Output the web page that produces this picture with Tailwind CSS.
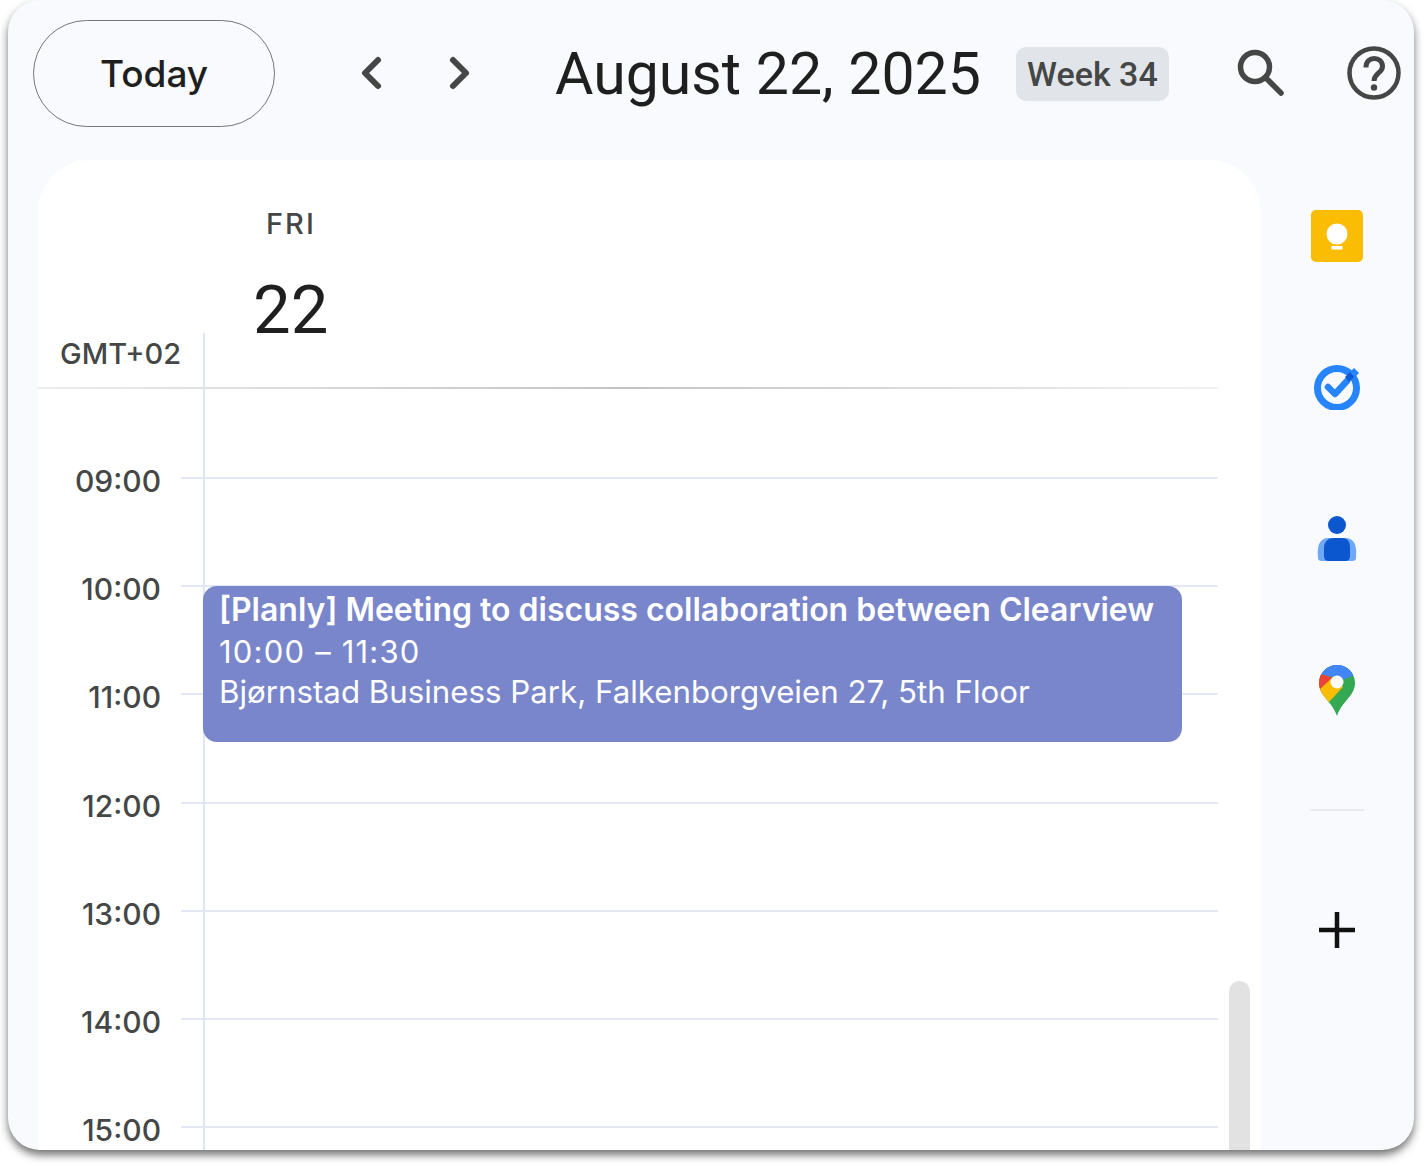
<!DOCTYPE html>
<html lang="en">
<head>
    <meta charset="UTF-8">
    <title>Calendar</title>
    <script src="https://cdn.jsdelivr.net/npm/@tailwindcss/browser@4"></script>
</head>
<body class="w-[1426px] h-[1166px] overflow-hidden bg-white font-['Roboto',sans-serif]">
    <div class="ml-[8px] w-[1406px] h-[1150px] rounded-[32px] overflow-hidden bg-[#f8fafd] shadow-[0_5px_8px_rgba(0,0,0,0.55)] flex flex-col">

        <!-- Top bar -->
        <header class="h-[160px] shrink-0 flex items-start text-[#1f1f1f]">
            <button class="ml-[25px] mt-[20px] w-[242px] h-[107px] rounded-full border-[1.5px] border-[#747775] text-[37px] font-medium font-['Inter',sans-serif] text-[#1f1f1f]">Today</button>
            <svg class="ml-[79px] mt-[50px]" width="36" height="46" viewBox="0 0 36 46" fill="none" stroke="#444746" stroke-width="6" stroke-linecap="round" stroke-linejoin="round"><path d="M24 10 L11 23 L24 36"/></svg>
            <svg class="ml-[51px] mt-[50px]" width="36" height="46" viewBox="0 0 36 46" fill="none" stroke="#444746" stroke-width="6" stroke-linecap="round" stroke-linejoin="round"><path d="M12 10 L25 23 L12 36"/></svg>
            <h1 class="ml-[78px] mt-[38px] text-[59px] leading-[72px] whitespace-nowrap text-[#1f1f1f]">August 22, 2025</h1>
            <span class="ml-[35px] mt-[47px] w-[153px] h-[54px] rounded-[10px] bg-[#e1e5ea] flex items-center justify-center text-[34px] font-medium text-[#444746]">Week 34</span>
            <svg class="ml-[64px] mt-[46px]" width="54" height="54" viewBox="0 0 54 54" fill="none" stroke="#444746" stroke-width="5.5"><circle cx="22" cy="21" r="14.5"/><path d="M32.5 31.5 L48 47" stroke-linecap="round"/></svg>
            <svg class="ml-[59px] mt-[45px]" width="56" height="56" viewBox="0 0 56 56" fill="none" stroke="#444746"><circle cx="28" cy="28" r="24.5" stroke-width="4.5"/><path d="M20 22.5 C20 10 36.5 11 36.5 21.5 C36.5 28 28 28 28 36" stroke-width="5"/><circle cx="28" cy="42.5" r="3.2" fill="#444746" stroke="none"/></svg>
        </header>

        <div class="flex flex-1 min-h-0">
            <!-- Day panel -->
            <main class="relative ml-[30px] w-[1223px] bg-white rounded-t-[52px] overflow-hidden">
                <div class="relative h-[229px]">
                    <div class="absolute left-[228px] top-[46px] text-[29px] leading-[36px] font-medium tracking-[2px] text-[#444746] font-['Inter',sans-serif]">FRI</div>
                    <div class="absolute left-[215px] top-[107px] text-[67px] leading-[86px] text-[#1f1f1f]">22</div>
                    <div class="absolute left-[22px] top-[176px] text-[29px] leading-[36px] font-medium text-[#444746] font-['Inter',sans-serif]">GMT+02</div>
                    <div class="absolute left-0 right-[43px] bottom-0 h-[2px] bg-gradient-to-r from-[#ececec] via-[#c4c4c4] to-[#f2f2f2]"></div>
                </div>

                <div class="pt-[88px] font-['Inter',sans-serif]">
                    <div class="flex h-[108.2px]"><span class="w-[123px] -mt-[14px] text-right text-[30px] leading-[36px] font-medium text-[#444746] h-[36px]">09:00</span><div class="ml-[20px] mr-[43px] flex-1 border-t-2 border-[#e3e8f4]"></div></div>
                    <div class="flex h-[108.2px]"><span class="w-[123px] -mt-[14px] text-right text-[30px] leading-[36px] font-medium text-[#444746] h-[36px]">10:00</span><div class="ml-[20px] mr-[43px] flex-1 border-t-2 border-[#e3e8f4]"></div></div>
                    <div class="flex h-[108.2px]"><span class="w-[123px] -mt-[14px] text-right text-[30px] leading-[36px] font-medium text-[#444746] h-[36px]">11:00</span><div class="ml-[20px] mr-[43px] flex-1 border-t-2 border-[#e3e8f4]"></div></div>
                    <div class="flex h-[108.2px]"><span class="w-[123px] -mt-[14px] text-right text-[30px] leading-[36px] font-medium text-[#444746] h-[36px]">12:00</span><div class="ml-[20px] mr-[43px] flex-1 border-t-2 border-[#e3e8f4]"></div></div>
                    <div class="flex h-[108.2px]"><span class="w-[123px] -mt-[14px] text-right text-[30px] leading-[36px] font-medium text-[#444746] h-[36px]">13:00</span><div class="ml-[20px] mr-[43px] flex-1 border-t-2 border-[#e3e8f4]"></div></div>
                    <div class="flex h-[108.2px]"><span class="w-[123px] -mt-[14px] text-right text-[30px] leading-[36px] font-medium text-[#444746] h-[36px]">14:00</span><div class="ml-[20px] mr-[43px] flex-1 border-t-2 border-[#e3e8f4]"></div></div>
                    <div class="flex h-[108.2px]"><span class="w-[123px] -mt-[14px] text-right text-[30px] leading-[36px] font-medium text-[#444746] h-[36px]">15:00</span><div class="ml-[20px] mr-[43px] flex-1 border-t-2 border-[#e3e8f4]"></div></div>
                </div>

                <!-- Column rule, event and scrollbar sit over the grid -->
                <div class="absolute left-[165px] top-[173px] bottom-0 w-[1.5px] bg-[#dfe5f2]"></div>
                <div class="absolute left-[165px] top-[426px] w-[979px] h-[156px] rounded-[14px] bg-[#7986cb] text-white pl-[16px] pt-[4px] text-[31px] leading-[40.5px] whitespace-nowrap font-['Inter',sans-serif]">
                    <div class="text-[32px] font-semibold">[Planly] Meeting to discuss collaboration between Clearview</div>
                    <div class="tracking-[1.2px] pt-[1px]">10:00 – 11:30</div>
                    <div class="text-[31.25px]">Bjørnstad Business Park, Falkenborgveien 27, 5th Floor</div>
                </div>
                <div class="absolute left-[1191px] top-[821px] bottom-0 w-[21px] rounded-t-full bg-[#e2e2e2]"></div>
            </main>

            <!-- Side apps -->
            <aside class="w-[151px] flex flex-col items-center">
                <div class="mt-[50px] w-[52px] h-[52px] rounded-[5px] bg-[#fbbc04] flex items-center justify-center">
                    <svg width="52" height="52" viewBox="0 0 52 52" fill="#fff"><circle cx="26" cy="24" r="10.5"/><path d="M21 30 h10 v3 h-10z"/><rect x="20.5" y="36" width="11" height="3.5"/></svg>
                </div>
                <svg class="mt-[100px] ml-[2px]" width="52" height="48" viewBox="0 0 52 48" fill="none">
                    <circle cx="25" cy="26" r="19.5" stroke="#2684fc" stroke-width="7"/>
                    <path d="M16 25 L23 32 L35 19" stroke="#2684fc" stroke-width="6.5" stroke-linecap="round" stroke-linejoin="round"/>
                    <path d="M35 13 L42 6 L47 11 L40 18z" fill="#2684fc"/>
                    <path d="M33 15 L38 10 L42 15 L37 20z" fill="#0f5ad4"/>
                </svg>
                <svg class="mt-[106px]" width="40" height="46" viewBox="0 0 40 46">
                    <path d="M1 42 C0 30 2 22 12 22 H28 C38 22 40 30 39 42 Q39 45 35 45 H5 Q1 45 1 42z" fill="#6fa8f5"/>
                    <circle cx="20" cy="9" r="9" fill="#0b57d0"/>
                    <path d="M7 40 V32 C7 25 12 22 17 22 H25 C31 22 33 26 33 32 V40 Q33 45 28 45 H12 Q7 45 7 40z" fill="#0b57d0"/>
                </svg>
                <svg class="mt-[103px]" width="36" height="52" viewBox="0 0 36 52">
                    <clipPath id="pin"><path d="M18 0 C8 0 0 8 0 18 C0 31 13 36 18 51 C23 36 36 31 36 18 C36 8 28 0 18 0Z"/></clipPath>
                    <g clip-path="url(#pin)">
                        <rect width="36" height="52" fill="#34a853"/>
                        <path d="M-2 -2 H38 V10 L0 12z" fill="#4285f4"/>
                        <path d="M3 -2 L18 17 L36 10 V-2z" fill="#4285f4"/>
                        <path d="M-2 8 L12 12 L18 17 L0 30 L-2 30z" fill="#ea4335"/>
                        <path d="M0 25 L14 12 L24 22 L10 37 L0 34z" fill="#fbbc04"/>
                    </g>
                    <circle cx="18" cy="17" r="6.5" fill="#fff"/>
                </svg>
                <div class="mt-[92px] w-[54px] h-[2px] bg-[#e8eaed]"></div>
                <svg class="mt-[100px]" width="38" height="38" viewBox="0 0 38 38" stroke="#111" stroke-width="4.5"><path d="M19 1 V37 M1 19 H37"/></svg>
            </aside>
        </div>
    </div>
</body>
</html>
